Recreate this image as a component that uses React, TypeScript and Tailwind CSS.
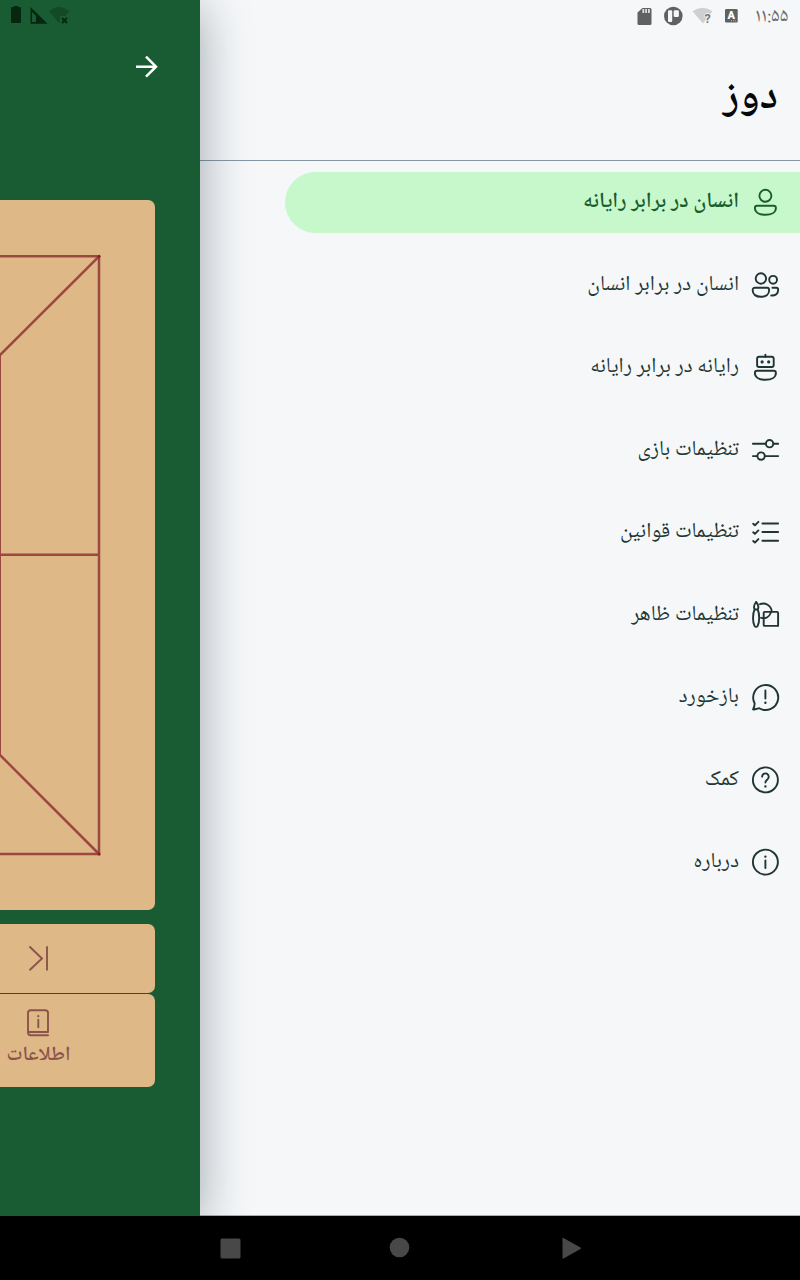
import type { ReactNode } from "react";

const S = ({ children }: { children: ReactNode }) => (
  <svg width="30" height="30" viewBox="-0.4 0.5 30 30" fill="none" stroke="currentColor" strokeWidth="1.9" strokeLinecap="round" strokeLinejoin="round" className="shrink-0">
    {children}
  </svg>
);

const body = "M6.700 18.300h16.600a2.200 2.200 0 0 1 2.200 2.200c0 4-4 6.800-10.500 6.800S4.500 24.500 4.500 20.500a2.200 2.200 0 0 1 2.200-2.200z";

const items: { label: string; icon: ReactNode }[] = [
  { label: "انسان در برابر رایانه", icon: <S><circle cx="15" cy="8.300" r="6" /><path d={body} /></S> },
  {
    label: "انسان در برابر انسان",
    icon: <S><circle cx="10.500" cy="9" r="5.200" /><circle cx="22.700" cy="10.300" r="3.900" /><path d="M4.300 18.300h12.400a2 2 0 0 1 2 2v.8c0 3.800-3.300 6.200-8.200 6.200s-8.200-2.400-8.200-6.200v-.8a2 2 0 0 1 2-2zM22 18.300h3.800a2 2 0 0 1 2 2c0 3.700-2.600 6-7 5.700" /></S>,
  },
  {
    label: "رایانه در برابر رایانه",
    icon: <S><rect x="6.700" y="4.300" width="16.600" height="10.200" rx="2" /><path d="M15 2.300v2" /><circle cx="11.700" cy="9.400" r="1" fill="currentColor" strokeWidth="1.200" /><circle cx="18.300" cy="9.400" r="1" fill="currentColor" strokeWidth="1.200" /><path d={body} /></S>,
  },
  {
    label: "تنظیمات بازی",
    icon: <S><g transform="translate(0 0.4)"><path d="M2.500 8.800h12.800M23 8.800h4.800M2.500 21.200h4.300M14.500 21.200h13.300" /><circle cx="19.200" cy="8.800" r="3.700" /><circle cx="10.700" cy="21.200" r="3.700" /></g></S>,
  },
  {
    label: "تنظیمات قوانین",
    icon: <S><g transform="translate(0 -0.5)"><path d="M12 6.500h15.700M12 15h15.700M12 23.700h15.700" /><path d="M2.800 6.700l1.700 1.600 3.500-3.500M2.800 15.300l1.700 1.600L8 13.400M2.800 24l1.700 1.600L8 22.100" /></g></S>,
  },
  {
    label: "تنظیمات ظاهر",
    icon: <S><path d="M5.700 2.500C3.700 5 2.700 7 4.200 10M5.700 2.500C7.900 5 9 7 7.300 10M4.200 10h3.100C9.300 14 9.300 23 7.200 26.500c-.8 1.200-2.200 1.200-3 0C2.100 23 2.100 14 4.200 10zM9.600 4.700c5-2 11.300 1 11.800 7.500M10.800 18.300c4 1 8-.6 9.600-5M27.700 13.400v13H14.300a1 1 0 0 1-1-1V13.400a1 1 0 0 1 1-1h12.400a1 1 0 0 1 1 1z" /></S>,
  },
  {
    label: "بازخورد",
    icon: <S><g transform="translate(0 -0.5)"><path d="M8.900 26.200A12.500 12.500 0 1 0 4.200 21.200c.2 2.300-.6 4.300-1.500 6.300 2 .2 4.200-.8 6.200-1.300zM15 8.500v8" /><circle cx="15" cy="20.700" r=".6" fill="currentColor" strokeWidth="1.200" /></g></S>,
  },
  {
    label: "کمک",
    icon: <S><g transform="translate(0 0.4)"><circle cx="15" cy="15" r="12.500" /><path d="M11.700 11.700a3.300 3.300 0 1 1 5.600 2.500c-1.300 1.200-2.300 1.700-2.300 3.500" /><circle cx="15" cy="21.500" r=".6" fill="currentColor" strokeWidth="1.200" /></g></S>,
  },
  {
    label: "درباره",
    icon: <S><g transform="translate(0 -0.4)"><circle cx="15" cy="15" r="12.500" /><path d="M15 13.400v7.500" /><circle cx="15" cy="9.500" r=".6" fill="currentColor" strokeWidth="1.200" /></g></S>,
  },
];

function Game() {
  return (
    <div className="relative z-10 flex h-[1216px] w-[200px] shrink-0 flex-col bg-[#195c33] shadow-[0_8px_46px_rgba(25,40,55,0.4)]">
      <svg width="80" height="32" viewBox="0 0 80 32" className="shrink-0">
        <path d="M11 8q0-1 1-1h2V6h4v1h2q1 0 1 1v14q0 1-1 1h-8q-1 0-1-1z" fill="#08250f" />
        <path fillRule="evenodd" d="M30.500 7L47.500 23.700H30.500zM32 12v10h4v-6z" fill="#08250f" />
        <path d="M49 11.300q10-8.500 20 0L65.500 16H60v6.500l-1 .5z" fill="#124a27" />
        <path d="M62 18l5 5M67 18l-5 5" stroke="#08250f" strokeWidth="1.800" />
      </svg>
      <div className="flex h-[168px] justify-end pt-[22px] pr-[40px]">
        <svg width="26" height="26" viewBox="0 0 26 26" fill="none" stroke="#fff" strokeWidth="2.500">
          <path d="M2 12.700h20M12 2.700l10 10-10 10" />
        </svg>
      </div>
      <div className="h-[710px] w-[155px] rounded-r-[7px] bg-[#deb887]">
        <svg width="155" height="710" viewBox="0 200 155 710" fill="none" stroke="#9c4840" strokeWidth="2.500">
          <path d="M0 256.300H99V854H0M0 554.800H99M99 256.300L0 355M99 854L0 755" />
          <path d="M0 355V755" strokeWidth="2" />
          <path d="M98 257.500l2-2M98 853l2 2" stroke="#882026" />
        </svg>
      </div>
      <div className="mt-[14px] flex h-[69px] w-[155px] rounded-r-[7px] bg-[#deb887] pt-[20px] pl-[24px]">
        <svg width="30" height="30" viewBox="0 0 30 30" fill="none" stroke="#8b544b" strokeWidth="1.900" strokeLinecap="round">
          <path d="M6 3l12 11.500L6 25.700M23 3v22.700" />
        </svg>
      </div>
      <div className="mt-px flex h-[93px] w-[155px] flex-col rounded-r-[7px] bg-[#deb887] text-[#8b544b]">
        <svg width="30" height="30" viewBox="0 0 30 30" fill="none" stroke="currentColor" strokeWidth="1.900" strokeLinecap="round" className="mt-[14px] ml-[23px]">
          <path d="M25 24H5V5q0-2.700 2.700-2.700h14.600Q25 2.300 25 5v19M5 24q0 3.300 2.700 3.300H25M15.300 11.700v7.500" />
          <circle cx="15.300" cy="8.200" r=".5" fill="currentColor" strokeWidth="1.200" />
        </svg>
        <div dir="rtl" className="mt-[2px] w-[70.500px] text-right text-[20.300px] leading-[30px] font-semibold whitespace-nowrap">اطلاعات</div>
      </div>
    </div>
  );
}

function StatusIcons() {
  return (
    <div className="flex h-[32px] shrink-0 items-center pl-[432px] text-[#66696b]">
      <svg width="120" height="32" viewBox="632 0 120 32" className="shrink-0">
        <path d="M642.500 8H650q1.500 0 1.500 1.500v14q0 1.500-1.500 1.500h-11q-1.500 0-1.500-1.500v-11z" fill="#606261" />
        <path d="M643.300 9v4M646.100 9v4M648.900 9v4" stroke="#dcdedf" strokeWidth="1.800" />
        <circle cx="673.300" cy="16" r="9.300" fill="#606261" />
        <rect x="668" y="10.300" width="4.200" height="11.700" rx="1.200" fill="#f5f7f9" />
        <rect x="673.700" y="10.300" width="5.200" height="6.700" rx="1.200" fill="#f5f7f9" />
        <path d="M692.500 11.300q10-7 20 0L703 23.500z" fill="#cfcfcf" />
        <text x="704.500" y="23" fontSize="12.500" fontWeight="700" fontFamily="Roboto, sans-serif" fill="#777" stroke="#f5f7f9" strokeWidth="1.500" paintOrder="stroke">?</text>
        <rect x="725" y="9" width="12.700" height="13.500" rx="1.300" fill="#606261" />
        <text x="727.500" y="19" fontSize="11" fontWeight="900" fontFamily="Roboto, sans-serif" fill="#fff">A</text>
        <path d="M731 20.700h5" stroke="#aaa" strokeWidth="1" strokeDasharray="1 1" />
      </svg>
      <span className="mt-[2px] ml-[3px] text-[19.200px] leading-none">۱۱:۵۵</span>
    </div>
  );
}

export default function App() {
  return (
    <div className="flex h-[1280px] w-[800px] flex-col overflow-hidden bg-black font-['Noto_Naskh_Arabic_UI','Noto_Naskh_Arabic','Noto_Sans_Arabic','DejaVu_Sans',sans-serif]">
      <div className="flex h-[1216px] shrink-0 overflow-hidden bg-[#f5f7f9]">
        <Game />
        <div className="flex w-[600px] flex-col border-b border-[#a7aeb5]">
          <StatusIcons />
          <div dir="rtl" className="h-[129px] shrink-0 border-b border-[#8597a5] pt-[31px] pr-[22px] text-[42.500px] leading-[70px] font-semibold text-[#05080b]">دوز</div>
          <nav dir="rtl" className="flex flex-col gap-[21.500px] pt-[11px]">
            {items.map((it, i) => (
              <div
                key={it.label}
                className={
                  i === 0
                    ? "flex h-[61px] w-[515px] items-center gap-[11px] rounded-l-full bg-[#c7f8cb] pr-[20px] text-[21.700px] font-semibold text-[#195c2e]"
                    : "flex h-[61px] w-[515px] items-center gap-[11px] pr-[20px] text-[21.400px] text-[#203532]"
                }
              >
                {it.icon}
                <span className="whitespace-nowrap">{it.label}</span>
              </div>
            ))}
          </nav>
        </div>
      </div>
      <div className="flex h-[64px] shrink-0">
        <svg width="800" height="64" viewBox="0 0 800 64" fill="#484848">
          <rect x="220.500" y="22.500" width="20" height="20" rx="1.500" />
          <circle cx="399.500" cy="31.500" r="9.800" />
          <path d="M562.500 22.500q0-1 1-.5L580.500 31.500q1 .8 0 1.500L563.500 42.500q-1 .5-1-.5z" />
        </svg>
      </div>
    </div>
  );
}
